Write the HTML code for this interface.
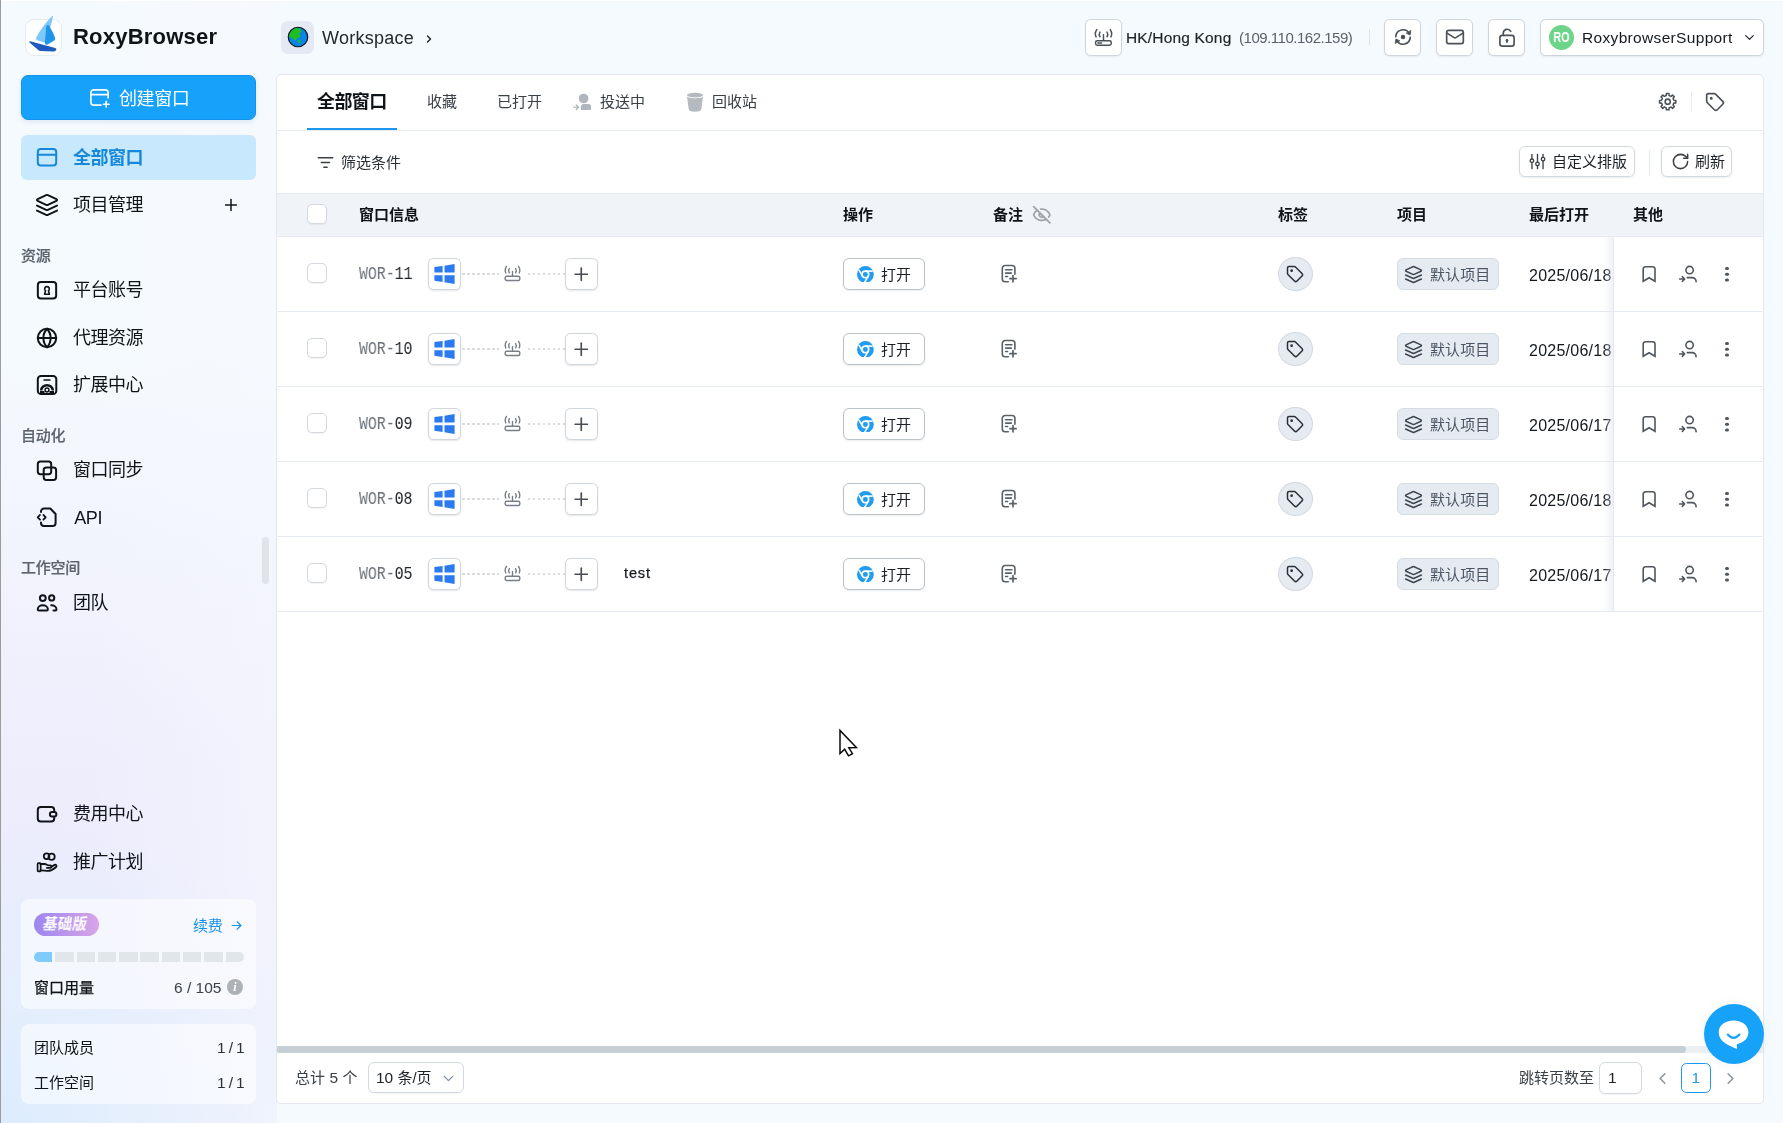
<!DOCTYPE html>
<html lang="zh-CN"><head><meta charset="utf-8"><title>RoxyBrowser</title>
<style>
*{box-sizing:border-box;margin:0;padding:0}
html,body{width:1783px;height:1123px;overflow:hidden}
body{font-family:"Liberation Sans","Noto Sans CJK SC",sans-serif;color:#0f1419;font-size:15px;
 background:#f5fafe;}
#app{position:relative;width:1783px;height:1123px;overflow:hidden;
 background:
  linear-gradient(180deg,#fff 0,#fff 1px,rgba(255,255,255,0) 1px) 1px 0/100% 2px no-repeat,
  linear-gradient(90deg,#9c9c9c 0,#9c9c9c 1px,rgba(0,0,0,0) 1px) 0 0/2px 100% no-repeat,
  radial-gradient(circle at 0 1123px,rgba(220,236,253,1) 0,rgba(224,238,253,.7) 120px,rgba(226,238,253,0) 330px) 0 0/277px 100% no-repeat,
  linear-gradient(90deg,rgba(246,248,254,0) 90px,rgba(246,248,254,.55) 277px) 0 0/277px 100% no-repeat,
  linear-gradient(180deg,rgba(238,237,252,0) 360px,rgba(238,237,252,.45) 540px,rgba(237,236,252,.9) 760px,rgba(237,236,252,.95) 900px,rgba(238,239,252,.85) 1123px) 0 0/277px 100% no-repeat,
  #f5fafe;}
.abs{position:absolute}
svg{display:block}
.t{position:absolute;white-space:nowrap;line-height:1}
.t,.nav,.sec,.th,.gs{will-change:transform}
/* sidebar */
.create{position:absolute;left:21px;top:75px;width:235px;height:45px;border-radius:7px;background:#16a1fb;border:1px solid #1394ec;box-shadow:0 2px 5px rgba(20,60,140,.10);color:#fff}
.nav-active{position:absolute;left:21px;top:135px;width:235px;height:45px;border-radius:6px;background:#c7e8fd}
.nav{position:absolute;left:35.300px;height:24px;display:flex;align-items:center;color:#0f1419;font-size:18px}
.nav svg{margin-right:14px}
.nav span{display:block;line-height:24px;letter-spacing:-.5px}
.sec{position:absolute;left:21px;font-size:15px;color:#5c636c;line-height:16px;font-weight:500;letter-spacing:-.25px;-webkit-text-stroke:.2px #5c636c}
.card{position:absolute;left:21px;width:235px;border-radius:8px;background:rgba(255,255,255,.55)}
/* header */
.hbtn{position:absolute;top:19px;width:37px;height:37px;border:1px solid #d0d5dc;border-radius:5.500px;background:#fff;box-shadow:0 1px 2px rgba(16,24,40,.07);display:flex;align-items:center;justify-content:center;color:#4b5158;padding-bottom:1px}
/* main */
.main{position:absolute;left:276px;top:74px;width:1488px;height:1030px;background:#fff;border:1px solid #e4e8ee;border-radius:5px;overflow:hidden}
.hl{position:absolute;left:0;height:1px;background:#e5e9f0}
.btn{position:absolute;height:33px;border:1px solid #d3d9e0;border-radius:6px;background:#fff;box-shadow:0 1px 2px rgba(16,24,40,.08);display:flex;align-items:center;color:#1b2127;font-size:15px}
.cb{position:absolute;left:30.300px;width:19.700px;height:19.700px;border:1px solid #d3d8df;border-radius:5px;background:#fff;box-shadow:0 1px 1px rgba(16,24,40,.05)}
.th{position:absolute;top:132.300px;font-weight:700;font-size:15px;line-height:16px;color:#0f1419;white-space:nowrap}
.row{position:absolute;left:0;width:1486px;height:75px;border-bottom:1px solid #e5e9f0}
.mono{font-family:"Liberation Mono","DejaVu Sans Mono",monospace}
.ibox{position:absolute;width:32.400px;height:31.800px;border:1px solid #d0d6dd;border-radius:5.500px;background:#fff;box-shadow:0 1px 2px rgba(16,24,40,.10);display:flex;align-items:center;justify-content:center}
.dot{position:absolute;height:2px;background:repeating-linear-gradient(90deg,#d9dce0 0,#d9dce0 2.500px,rgba(0,0,0,0) 2.500px,rgba(0,0,0,0) 5px)}
.chip{position:absolute;height:33px;border:1px solid #d6dce4;border-radius:6px;background:#e6ebf1;display:flex;align-items:center;color:#4b5563;font-size:15px}
.tagc{position:absolute;width:34.800px;height:34.500px;border-radius:50%;background:#e6ebf1;border:1px solid #d3d9e0;display:flex;align-items:center;justify-content:center;color:#2a3038}
</style></head>
<body>
<div id="app">

<div class="abs" style="left:25px;top:19px;width:37px;height:37px;border-radius:9px;background:#fff;border:1px solid #e6eaf3"></div>
<svg class="abs" style="left:20px;top:10px" width="50" height="50" viewBox="20 10 50 50">
<path d="M52.100 15.900 Q52.900 15.200 52.900 16.300 Q52.300 21 50.700 26 L46 43 L37.200 40.200 Q35.400 39.600 36.200 37.800 Q41 27.500 52.100 15.900 Z" fill="#7cc8fb"/>
<path d="M46.300 26.200 Q47.700 23.800 49.300 26 Q53.500 33 55.100 38 Q55.500 39.600 54.200 40.500 L47.600 44.600 Q46.200 45.300 45.300 44 Q44.800 43 44.900 42 Z" fill="#1e94ea"/>
<path d="M30.100 41.300 L55.300 48 Q57 48.800 56.200 50 Q55.200 51.500 53.300 51.600 L40.300 51.100 Q39.300 51 38.500 50.300 L29.500 42.500 Q28.800 41.200 30.100 41.300 Z" fill="#1f5bbd"/>
</svg>
<div class="t" style="left:73px;top:26px;font-size:22px;font-weight:700;letter-spacing:.22px;color:#0f1419" id="brand">RoxyBrowser</div>
<div class="create"><div class="abs" style="left:66px;top:10px"><svg width="23" height="23" viewBox="0 0 24 24" fill="none" stroke="currentColor" stroke-width="1.7" stroke-linecap="round" stroke-linejoin="round" class="" style=""><path d="M21 12.500V7a3 3 0 0 0-3-3H6a3 3 0 0 0-3 3v10a3 3 0 0 0 3 3h7.500"/><path d="M3 9h18"/><path d="M16 19h6"/><path d="M19 16v6"/></svg></div><div class="t" style="left:96.500px;top:13.500px;font-size:18px;letter-spacing:-.4px" id="createtxt">创建窗口</div></div>
<div class="nav-active"></div>
<div class="nav" style="top:145.5px;color:#1588db;font-weight:700"><svg width="24" height="24" viewBox="0 0 24 24" fill="none" stroke="currentColor" stroke-width="2" stroke-linecap="round" stroke-linejoin="round" class="" style=""><rect width="18.400" height="16.500" x="2.800" y="2.900" rx="3"/><path d="M2.800 8.800h18.400"/></svg><span style="">全部窗口</span></div>
<div class="nav" style="top:192.5px;color:#0f1419;font-weight:400"><svg width="24" height="24" viewBox="0 0 24 24" fill="none" stroke="currentColor" stroke-width="2" stroke-linecap="round" stroke-linejoin="round" class="" style=""><path d="m12.83 2.18a2 2 0 0 0-1.66 0L2.6 6.08a1 1 0 0 0 0 1.83l8.58 3.91a2 2 0 0 0 1.66 0l8.58-3.9a1 1 0 0 0 0-1.83Z"/><path d="m22 17.65-9.17 4.16a2 2 0 0 1-1.66 0L2 17.65"/><path d="m22 12.65-9.17 4.16a2 2 0 0 1-1.66 0L2 12.65"/></svg><span style="">项目管理</span></div>
<div class="abs" style="left:221px;top:195px;color:#0f1419"><svg width="20" height="20" viewBox="0 0 24 24" fill="none" stroke="currentColor" stroke-width="1.8" stroke-linecap="round" stroke-linejoin="round" class="" style=""><path d="M5.500 12h13"/><path d="M12 5.500v13"/></svg></div>
<div class="sec" style="top:248px">资源</div>
<div class="nav" style="top:278px;color:#0f1419;font-weight:400"><svg width="24" height="24" viewBox="0 0 24 24" fill="none" stroke="currentColor" stroke-width="2" stroke-linecap="round" stroke-linejoin="round" class="" style=""><rect width="18.300" height="16.500" x="2.850" y="4" rx="3"/><path d="M12 8.600a2.300 2.300 0 0 1 1.500 4.100l.9 3.500h-4.800l.9-3.500a2.300 2.300 0 0 1 1.500-4.100z" stroke-width="1.600"/></svg><span style="">平台账号</span></div>
<div class="nav" style="top:325.5px;color:#0f1419;font-weight:400"><svg width="24" height="24" viewBox="0 0 24 24" fill="none" stroke="currentColor" stroke-width="2" stroke-linecap="round" stroke-linejoin="round" class="" style=""><circle cx="12" cy="12" r="9.200"/><path d="M12 2.800a13.500 13.500 0 0 0 0 18.400 13.500 13.500 0 0 0 0-18.400"/><path d="M2.800 12h18.400"/></svg><span style="">代理资源</span></div>
<div class="nav" style="top:373px;color:#0f1419;font-weight:400"><svg width="24" height="24" viewBox="0 0 24 24" fill="none" stroke="currentColor" stroke-width="2" stroke-linecap="round" stroke-linejoin="round" class="" style=""><rect width="18.500" height="18" x="2.800" y="3.100" rx="3.200"/><path d="M9 7h6" stroke-width="1.500"/><path d="M6.200 17.500a5.800 5.300 0 0 1 11.600 0" stroke-width="2.600" stroke-linecap="butt"/><circle cx="12" cy="17" r="1.900" stroke-width="1.500"/><path d="M5 19.300h4.500M14.500 19.300h4.500" stroke-width="2.400" stroke-linecap="butt"/></svg><span style="">扩展中心</span></div>
<div class="sec" style="top:428px">自动化</div>
<div class="nav" style="top:457.5px;color:#0f1419;font-weight:400"><svg width="24" height="24" viewBox="0 0 24 24" fill="none" stroke="currentColor" stroke-width="2" stroke-linecap="round" stroke-linejoin="round" class="" style=""><rect width="13.400" height="12.600" x="2.800" y="3.600" rx="2.600"/><rect width="12.400" height="12.500" x="8.700" y="9.400" rx="2.600"/></svg><span style="">窗口同步</span></div>
<div class="nav" style="top:505px;color:#0f1419;font-weight:400"><svg width="24" height="24" viewBox="0 0 24 24" fill="none" stroke="currentColor" stroke-width="2" stroke-linecap="round" stroke-linejoin="round" class="" style=""><path d="M6 7.100V6.500a3 3 0 0 1 3-3h6.300L20.600 9v9a3 3 0 0 1-3 3H9a3 3 0 0 1-3-3v-.600"/><path d="M5 9.900 2.700 12.300 5 14.700" stroke-width="1.800"/><path d="M8.400 9.900l2.300 2.400-2.300 2.400" stroke-width="1.800"/></svg><span style="position:relative;left:1.300px;top:.800px;letter-spacing:-.45px">API</span></div>
<div class="sec" style="top:560px">工作空间</div>
<div class="nav" style="top:590.5px;color:#0f1419;font-weight:400"><svg width="24" height="24" viewBox="0 0 24 24" fill="none" stroke="currentColor" stroke-width="2" stroke-linecap="round" stroke-linejoin="round" class="" style=""><circle cx="7.800" cy="7.100" r="2.900"/><circle cx="16.700" cy="6.900" r="2.600"/><path d="M2.700 18.300a5.100 4 0 0 1 10.200 0q0 1.200-1.200 1.200H3.900q-1.200 0-1.200-1.200z"/><path d="M16.200 14.300c3.200 0 5.300 1.900 5.300 4.100q0 1.100-1.100 1.100h-1.900"/></svg><span style="">团队</span></div>
<div class="abs" style="left:262px;top:537px;width:7px;height:47px;border-radius:4px;background:#dfe4ea"></div>
<div class="nav" style="top:802px;color:#0f1419;font-weight:400"><svg width="24" height="24" viewBox="0 0 24 24" fill="none" stroke="currentColor" stroke-width="2" stroke-linecap="round" stroke-linejoin="round" class="" style=""><path d="M19.200 9.600V8a3 3 0 0 0-3-3H5.800a3 3 0 0 0-3 3v8.500a3 3 0 0 0 3 3h10.400a3 3 0 0 0 3-3v-1.600"/><rect x="14.900" y="10.100" width="6.500" height="4.400" rx="2.200"/></svg><span style="">费用中心</span></div>
<div class="nav" style="top:849.5px;color:#0f1419;font-weight:400"><svg width="24" height="24" viewBox="0 0 24 24" fill="none" stroke="currentColor" stroke-width="2" stroke-linecap="round" stroke-linejoin="round" class="" style=""><circle cx="11.600" cy="6.200" r="2.800" stroke-width="1.800"/><circle cx="16.600" cy="6.700" r="3.100" stroke-width="1.800"/><rect x="2.600" y="13.200" width="3.100" height="8.100" rx=".7" stroke-width="1.700"/><path d="M5.400 14h4.400c1.700 0 2.300 1.400 4 1.400h1.500a1.250 1.250 0 0 1 0 2.500h-3.400" stroke-width="1.800"/><path d="M16.400 16.700l3.200-1.800a1.300 1.300 0 0 1 1.500 2.100c-2.500 2.400-5.600 3.900-8.300 3.900-2.300 0-4.200-.5-7.400-.5" stroke-width="1.800"/></svg><span style="">推广计划</span></div>
<div class="card" style="top:899px;height:110px">
 <div class="abs" style="left:13px;top:14px;width:65px;height:23px;border-radius:12px;background:linear-gradient(90deg,#9b86ef,#d9a5e8)"></div>
 <div class="t" style="left:22px;top:18px;font-size:14.500px;font-weight:700;color:#fff;transform:skewX(-9deg);letter-spacing:.3px">基础版</div>
 <div class="t" style="left:172px;top:18.500px;font-size:15px;color:#1a90e8;letter-spacing:-.3px">续费</div>
 <div class="abs" style="left:208px;top:18.500px;color:#1a90e8"><svg width="15" height="15" viewBox="0 0 24 24" fill="none" stroke="currentColor" stroke-width="1.8" stroke-linecap="round" stroke-linejoin="round" class="" style=""><path d="M5 12h14"/><path d="m13 6 6 6-6 6"/></svg></div>
 <div class="abs" style="left:13px;top:53px;width:210px;height:10px;border-radius:5px;overflow:hidden;display:flex;gap:2.800px">
  <i style="flex:1;background:#7fcbfb"></i><i style="flex:1;background:#e1e6eb"></i><i style="flex:1;background:#e1e6eb"></i><i style="flex:1;background:#e1e6eb"></i><i style="flex:1;background:#e1e6eb"></i><i style="flex:1;background:#e1e6eb"></i><i style="flex:1;background:#e1e6eb"></i><i style="flex:1;background:#e1e6eb"></i><i style="flex:1;background:#e1e6eb"></i><i style="flex:1;background:#e1e6eb"></i>
 </div>
 <div class="t" style="left:13px;top:81px;font-size:15px;color:#0f1419;font-weight:400;-webkit-text-stroke:.25px #0f1419">窗口用量</div>
 <div class="t" style="right:35px;top:80.500px;font-size:15.500px;color:#3c424a">6 / 105</div>
 <div class="abs gs" style="left:206px;top:80px;width:16px;height:16px;border-radius:50%;background:#acb2b8;color:#fff;font:italic 700 12px/16px 'Liberation Serif',serif;text-align:center">i</div>
</div>
<div class="card" style="top:1024px;height:80px">
 <div class="t" style="left:13px;top:16px;font-size:15px;color:#0f1419">团队成员</div>
 <div class="t" style="right:12px;top:16px;font-size:15.500px;color:#2c323a;word-spacing:-1px;letter-spacing:-.15px">1 / 1</div>
 <div class="t" style="left:13px;top:51px;font-size:15px;color:#0f1419">工作空间</div>
 <div class="t" style="right:12px;top:51px;font-size:15.500px;color:#2c323a;word-spacing:-1px;letter-spacing:-.15px">1 / 1</div>
</div>


<div class="abs" style="left:281px;top:21px;width:33px;height:33px;border-radius:7px;background:#e4e9f3"><div class="abs" style="left:5.600px;top:4.900px"><svg width="22" height="22" viewBox="0 0 23 23"><circle cx="11.500" cy="11.500" r="10.200" fill="#0b84e3" stroke="#0c1116" stroke-width="1.200"/>
<path d="M3.200 7.500C5 4 8.500 2 12 2.100c1 .8 2.500 1.200 3 2.500-.8 1.500-1 2.800-2.300 3.600.3 1.200 1.500 2 1.200 3.200-1 1-2.300.2-3.300 1.300-.8 1.100-1.400 2.400-2.800 2.200-1.200-.7-1.400-2-2.700-2.300C3.600 11.800 2.200 11.500 2 10.500c.3-1 .7-2 1.200-3z" fill="#1fbe1f"/>
<path d="M11.800 14.500c1-.2 2 .5 2.200 1.500.3 1-.3 2-1.200 2.200-.8-.5-1.200-1.300-1.400-2.200-.1-.6 0-1.200.4-1.500z" fill="#1fbe1f"/></svg></div></div>
<div class="t" style="left:321.500px;top:29px;font-size:18px;color:#24292f;letter-spacing:.25px" id="ws">Workspace</div>
<div class="abs" style="left:423px;top:32.900px;color:#24292f"><svg width="12" height="12" viewBox="0 0 24 24" fill="none" stroke="currentColor" stroke-width="2.9" stroke-linecap="round" stroke-linejoin="round" class="" style=""><path d="m9 18 6-6-6-6"/></svg></div>
<div class="hbtn" style="left:1085px"><svg width="19" height="19" viewBox="0 0 20 20" fill="none" stroke="currentColor" stroke-width="1.550" stroke-linecap="round" stroke-linejoin="round"><rect x="1.650" y="13.400" width="16.500" height="4.800" rx="1.800"/><path d="M4 15.800h4"/><path d="M10 7v6"/><path d="M6.300 4.300Q4.700 6.800 6.300 9.200"/><path d="M13.700 4.300Q15.300 6.800 13.700 9.200"/><path d="M2.900 1.700Q.3 5.500 2.200 9.400"/><path d="M17.100 1.700Q19.700 5.500 17.800 9.400"/></svg></div>
<div class="t" style="left:1126px;top:29.500px;font-size:15.500px;color:#1f2328;letter-spacing:.17px;-webkit-text-stroke:.18px #1f2328" id="hk">HK/Hong Kong</div>
<div class="t" style="left:1238.500px;top:29.700px;font-size:15px;color:#5a616b;letter-spacing:-.48px" id="ip">(109.110.162.159)</div>
<div class="abs" style="left:1369px;top:29px;width:1px;height:16px;background:#e0e4ea"></div>
<div class="hbtn" style="left:1384px"><svg width="20" height="20" viewBox="0 0 24 24" fill="none" stroke="currentColor" stroke-width="2" stroke-linecap="round" stroke-linejoin="round" class="" style=""><path d="M3.300 11.600a8.700 8.700 0 0 1 16.300-3.700"/><path d="M21.300 4.600 20.500 9.600 16.200 7.600z" fill="currentColor" stroke-width="1"/><path d="M20.700 12.400a8.700 8.700 0 0 1-16.300 3.700"/><path d="M2.700 19.400 3.500 14.400 7.800 16.400z" fill="currentColor" stroke-width="1"/><circle cx="12" cy="12" r="1.700" fill="currentColor"/></svg></div>
<div class="hbtn" style="left:1436px"><svg width="20" height="20" viewBox="0 0 24 24" fill="none" stroke="currentColor" stroke-width="2" stroke-linecap="round" stroke-linejoin="round" class="" style=""><rect width="20" height="16" x="2" y="4" rx="2.500"/><path d="m22 7-8.970 5.700a1.940 1.940 0 0 1-2.060 0L2 7"/></svg></div>
<div class="hbtn" style="left:1488px"><svg width="20" height="20" viewBox="0 0 24 24" fill="none" stroke="currentColor" stroke-width="2" stroke-linecap="round" stroke-linejoin="round" class="" style=""><rect width="17" height="13" x="3.500" y="10" rx="2.800"/><path d="M7.500 10V7.500a4.800 4.800 0 0 1 9-2.300"/><path d="M12 15.500v2.500" stroke-width="2.200"/><path d="M10.900 15.800l1.100-1.300 1.100 1.300z" stroke-width="1.200" fill="currentColor"/></svg></div>
<div class="hbtn" style="left:1540px;width:224px;justify-content:flex-start;border-color:#cdd3da">
 <div class="abs" style="left:8px;top:5px;width:25px;height:25px;border-radius:50%;background:#6dd58a"></div>
 <div class="t" style="left:8px;top:9.500px;width:25px;text-align:center;color:#fff;font-size:14.500px;font-weight:700;transform:scaleX(.74);letter-spacing:.2px" id="ro">RO</div>
 <div class="t" style="left:40.500px;top:9.500px;font-size:15.500px;color:#14191f;letter-spacing:.33px" id="user">RoxybrowserSupport</div>
 <div class="abs" style="left:200.500px;top:10px;color:#24292f"><svg width="15" height="15" viewBox="0 0 24 24" fill="none" stroke="currentColor" stroke-width="2" stroke-linecap="round" stroke-linejoin="round" class="" style=""><path d="m6 9 6 6 6-6"/></svg></div>
</div>


<div class="main">
 <!-- tabs -->
 <div class="t" style="left:40px;top:18.2px;font-size:18px;font-weight:700;color:#0f1419;letter-spacing:-.6px" id="tab1">全部窗口</div>
 <div class="abs" style="left:30px;top:53px;width:90px;height:2px;background:#1d97ee"></div>
 <div class="t" style="left:150px;top:19px;font-size:15px;color:#3a4048">收藏</div>
 <div class="t" style="left:220px;top:19px;font-size:15px;color:#3a4048">已打开</div>
 <div class="abs" style="left:296px;top:18px"><svg width="19" height="18" viewBox="0 0 19 18"><circle cx="10.600" cy="5.500" r="4.800" fill="#b0b6bd"/><path d="M8 17v-3.200a2.700 2.700 0 0 1 2.700-2.700h4.600a2.700 2.700 0 0 1 2.700 2.700V17z" fill="#b0b6bd"/><path d="M.8 14.200h4.500M3.300 11.900l2.300 2.300-2.300 2.300" stroke="#b0b6bd" stroke-width="1.300" fill="none" stroke-linecap="round" stroke-linejoin="round"/></svg></div>
 <div class="t" style="left:323px;top:19px;font-size:15px;color:#3a4048">投送中</div>
 <div class="abs" style="left:409px;top:17.3px"><svg width="18" height="20" viewBox="0 0 18 20"><ellipse cx="9" cy="3.200" rx="8" ry="2.500" fill="#b4bac0"/><path d="M1 4.800c2.500 1.900 13.500 1.900 16 0L15.300 17.300c-.3 1.800-3 2.500-6.300 2.500s-6-.7-6.300-2.500z" fill="#b4bac0"/><path d="M1.300 4.300c2.500 1.900 12.900 1.900 15.400 0" stroke="#fff" stroke-width=".8" fill="none" opacity=".75"/></svg></div>
 <div class="t" style="left:435px;top:19px;font-size:15px;color:#3a4048">回收站</div>
 <div class="abs" style="left:1381.2px;top:17.2px;color:#4b5158"><svg width="19.4" height="19.4" viewBox="0 0 24 24" fill="none" stroke="currentColor" stroke-width="1.9" stroke-linecap="round" stroke-linejoin="round" class="" style=""><path d="M10.24 4.40L10.40 1.93L13.60 1.93L13.76 4.40L16.13 5.38L18.00 3.75L20.25 6.00L18.62 7.87L19.60 10.24L22.07 10.40L22.07 13.60L19.60 13.76L18.62 16.13L20.25 18.00L18.00 20.25L16.13 18.62L13.76 19.60L13.60 22.07L10.40 22.07L10.24 19.60L7.87 18.62L6.00 20.25L3.75 18.00L5.38 16.13L4.40 13.76L1.93 13.60L1.93 10.40L4.40 10.24L5.38 7.87L3.75 6.00L6.00 3.75L7.87 5.38Z"/><circle cx="12" cy="12" r="3.200"/></svg></div>
 <div class="abs" style="left:1414px;top:17px;width:1px;height:20px;background:#e6e9ef"></div>
 <div class="abs" style="left:1427.8px;top:16.7px;color:#4b5158"><svg width="20" height="20" viewBox="0 0 24 24" fill="none" stroke="currentColor" stroke-width="2" stroke-linecap="round" stroke-linejoin="round" class="" style=""><path d="M12.586 2.586A2 2 0 0 0 11.172 2H4a2 2 0 0 0-2 2v7.172a2 2 0 0 0 .586 1.414l8.704 8.704a2.426 2.426 0 0 0 3.420 0l6.580-6.580a2.426 2.426 0 0 0 0-3.420z"/><circle cx="7.500" cy="7.500" r=".8" fill="currentColor"/></svg></div>
 <div class="hl" style="top:55px;width:1486px"></div>
 <!-- filter -->
 <div class="abs" style="left:39.4px;top:77.5px;color:#3a3f46"><svg width="19" height="19" viewBox="0 0 24 24" fill="none" stroke="currentColor" stroke-width="2.1" stroke-linecap="round" stroke-linejoin="round" class="" style=""><path d="M3 6h18"/><path d="M7 12h10"/><path d="M10 18h4"/></svg></div>
 <div class="t" style="left:64px;top:79.8px;font-size:15px;color:#2a3038">筛选条件</div>
 <div class="btn" style="left:1242.4px;top:71.4px;width:116.100px;height:31px"><div class="abs" style="left:8px;top:5px;color:#3a3f46"><svg width="19" height="19" viewBox="0 0 24 24" fill="none" stroke="currentColor" stroke-width="1.7" stroke-linecap="round" stroke-linejoin="round" class="" style=""><path d="M5 3v5"/><path d="M5 14v7"/><circle cx="5" cy="11" r="2.200"/><path d="M12 3v9"/><path d="M12 18v3"/><circle cx="12" cy="15" r="2.200"/><path d="M19 3v3"/><path d="M19 12v9"/><circle cx="19" cy="9" r="2.200"/></svg></div><div class="t" style="left:32px;top:6.800px;font-size:15px">自定义排版</div></div>
 <div class="abs" style="left:1372px;top:75px;width:1px;height:25px;background:#e3e6ea"></div>
 <div class="btn" style="left:1384.3px;top:71.4px;width:71.100px;height:31px"><div class="abs" style="left:8.500px;top:5px;color:#3a3f46"><svg width="19" height="19" viewBox="0 0 24 24" fill="none" stroke="currentColor" stroke-width="1.9" stroke-linecap="round" stroke-linejoin="round" class="" style=""><path d="M21 12a9 9 0 1 1-9-9c2.520 0 4.930 1 6.740 2.740L21 8"/><path d="M21 3v5h-5"/></svg></div><div class="t" style="left:32.500px;top:6.800px;font-size:15px">刷新</div></div>
 <!-- thead -->
 <div class="abs" style="left:0;top:118px;width:1486px;height:44px;background:#f0f4f9;border-top:1px solid #e5e9f0;border-bottom:1px solid #e5e9f0"></div>
 <div class="cb" style="top:129.2px"></div>
 <div class="th" style="left:82px">窗口信息</div>
 <div class="th" style="left:566px">操作</div>
 <div class="th" style="left:716px">备注</div>
 <div class="abs" style="left:755.3px;top:130.3px;color:#9ea4aa"><svg width="19.5" height="19.5" viewBox="0 0 24 24" fill="none" stroke="currentColor" stroke-width="2.2" stroke-linecap="round" stroke-linejoin="round" class="" style=""><path d="M10.733 5.076a10.744 10.744 0 0 1 11.205 6.575 1 1 0 0 1 0 .696 10.747 10.747 0 0 1-1.444 2.490"/><path d="M14.084 14.158a3 3 0 0 1-4.242-4.242"/><path d="M17.479 17.499a10.750 10.750 0 0 1-15.417-5.151 1 1 0 0 1 0-.696 10.750 10.750 0 0 1 4.446-5.143"/><path d="m2 2 20 20"/></svg></div>
 <div class="th" style="left:1001px">标签</div>
 <div class="th" style="left:1120px">项目</div>
 <div class="th" style="left:1252px">最后打开</div>
 <div class="th" style="left:1356px">其他</div>
 <div class="row" style="top:162px">
 <div class="cb" style="top:26px"></div>
 <div class="t mono" style="left:82px;top:27.500px;font-size:18px;color:#6a7079;transform:scaleX(.825);transform-origin:0 50%">WOR-<span style="color:#1f2328">11</span></div>
 <div class="ibox" style="left:151.3px;top:21.300px"><svg width="21" height="20" viewBox="0 0 20.200 20"><path d="M0 3.100 8.200 2v6.600H0zM10.100 1.700 20.200 0v8.600H10.100zM0 11.200h8.200v6.700L0 16.800zM10.100 11.200h10.100V20l-10.100-1.800z" fill="#2b7af0"/></svg></div>
 <div class="dot" style="left:184.5px;top:36px;width:37px"></div>
 <div class="abs" style="left:227.4px;top:27.600px;color:#787e86"><svg width="17" height="17" viewBox="0 0 20 20" fill="none" stroke="currentColor" stroke-width="1.650" stroke-linecap="round" stroke-linejoin="round"><rect x="1.400" y="13.200" width="17.200" height="5" rx="1.800"/><path d="M10 7.500v5.500"/><path d="M6.300 4.300Q4.700 6.800 6.300 9.200"/><path d="M13.700 4.300Q15.300 6.800 13.700 9.200"/><path d="M2.900 1.700Q.3 5.500 2.200 9.400"/><path d="M17.100 1.700Q19.700 5.500 17.800 9.400"/></svg></div>
 <div class="dot" style="left:250.5px;top:36px;width:38px"></div>
 <div class="ibox" style="left:288.4px;top:21.300px;color:#4a4f57"><svg width="22.5" height="22.5" viewBox="0 0 24 24" fill="none" stroke="currentColor" stroke-width="1.8" stroke-linecap="round" stroke-linejoin="round" class="" style=""><path d="M5.500 12h13"/><path d="M12 5.500v13"/></svg></div>
 
 <div class="btn" style="left:566.2px;top:21px;width:81.600px;height:31.700px;border-color:#bcc2ca">
   <div class="abs" style="left:13.200px;top:6.700px"><svg width="16.800" height="16.800" viewBox="0 0 24 24"><circle cx="12" cy="12" r="12" fill="#209cf1"/>
<circle cx="12" cy="12" r="4.700" fill="none" stroke="#fff" stroke-width="2.300"/>
<path d="M12 7.300H22.500" stroke="#fff" stroke-width="2.300" fill="none"/>
<path d="M7.900 14.400L2.700 5.400" stroke="#fff" stroke-width="2.300" fill="none"/>
<path d="M16.100 14.400L10.900 23.400" stroke="#fff" stroke-width="2.300" fill="none"/></svg></div><div class="t" style="left:37px;top:7.500px;font-size:15px">打开</div></div>
 <div class="abs" style="left:723px;top:27px;color:#5a6068"><svg width="20" height="20" viewBox="0 0 20 20" fill="none" stroke="currentColor" stroke-width="1.600" stroke-linecap="round" stroke-linejoin="round"><path d="M14.900 10.300V4.300a2.800 2.800 0 0 0-2.800-2.800H5.100a2.800 2.800 0 0 0-2.800 2.800v10.700a2.800 2.800 0 0 0 2.800 2.800h3.200"/><path d="M5.600 5.700h6.300M5.600 9.100h5.800M5.600 12.500h2"/><path d="M9.900 14.700h6.200M13 11.600v6.200" stroke-width="1.700"/></svg></div>
 <div class="tagc" style="left:1001px;top:19.600px"><svg width="18" height="18" viewBox="0 0 24 24" fill="none" stroke="currentColor" stroke-width="2" stroke-linecap="round" stroke-linejoin="round" class="" style=""><path d="M12.586 2.586A2 2 0 0 0 11.172 2H4a2 2 0 0 0-2 2v7.172a2 2 0 0 0 .586 1.414l8.704 8.704a2.426 2.426 0 0 0 3.420 0l6.580-6.580a2.426 2.426 0 0 0 0-3.420z"/><circle cx="7.500" cy="7.500" r=".8" fill="currentColor"/></svg></div>
 <div class="chip" style="left:1120.2px;top:21px;width:101.600px;height:31.500px"><div class="abs" style="left:6px;top:5.500px;color:#3f4650"><svg width="19" height="19" viewBox="0 0 24 24" fill="none" stroke="currentColor" stroke-width="1.9" stroke-linecap="round" stroke-linejoin="round" class="" style=""><path d="m12.83 2.18a2 2 0 0 0-1.66 0L2.6 6.08a1 1 0 0 0 0 1.83l8.58 3.91a2 2 0 0 0 1.66 0l8.58-3.9a1 1 0 0 0 0-1.83Z"/><path d="m22 17.65-9.17 4.16a2 2 0 0 1-1.66 0L2 17.65"/><path d="m22 12.65-9.17 4.16a2 2 0 0 1-1.66 0L2 12.65"/></svg></div><div class="t" style="left:32px;top:7.500px;font-size:15px;letter-spacing:.1px">默认项目</div></div>
 <div class="t" style="left:1252.3px;top:30.700px;font-size:16px;color:#14191f;letter-spacing:.25px">2025/06/18</div>
 <div class="abs" style="left:1326px;top:0;width:10px;height:74px;background:linear-gradient(90deg,rgba(225,230,240,0),rgba(225,230,240,.55))"></div>
 <div class="abs" style="left:1336px;top:0;width:151px;height:74px;background:#fff;border-left:1px solid #e4e8f0"></div>
 <div class="abs" style="left:1362px;top:27px;color:#50565e"><svg width="20" height="20" viewBox="0 0 20 20" fill="none" stroke="currentColor" stroke-width="1.600" stroke-linecap="butt" stroke-linejoin="miter"><path d="M4.200 17.300V5a2.300 2.300 0 0 1 2.300-2.300h7.200A2.300 2.300 0 0 1 16 5v12.300l-5.900-3.600z"/></svg></div>
 <div class="abs" style="left:1401px;top:27px;color:#50565e"><svg width="20" height="20" viewBox="0 0 20 20" fill="none" stroke="currentColor" stroke-width="1.600" stroke-linecap="round" stroke-linejoin="round"><circle cx="11.600" cy="6.100" r="3.700"/><path d="M9.300 13.600h5a3.800 3.800 0 0 1 3.800 3.800v.4"/><path d="M1.600 15h5M4.300 12.600l2.400 2.400-2.400 2.400" stroke-width="1.500"/></svg></div>
 <div class="abs" style="left:1448.2px;top:29.700px;width:3.500px;height:3.500px;border-radius:50%;background:#50565e;box-shadow:0 5.700px 0 #50565e,0 11.400px 0 #50565e"></div>
</div><div class="row" style="top:237px">
 <div class="cb" style="top:26px"></div>
 <div class="t mono" style="left:82px;top:27.500px;font-size:18px;color:#6a7079;transform:scaleX(.825);transform-origin:0 50%">WOR-<span style="color:#1f2328">10</span></div>
 <div class="ibox" style="left:151.3px;top:21.300px"><svg width="21" height="20" viewBox="0 0 20.200 20"><path d="M0 3.100 8.200 2v6.600H0zM10.100 1.700 20.200 0v8.600H10.100zM0 11.200h8.200v6.700L0 16.800zM10.100 11.200h10.100V20l-10.100-1.800z" fill="#2b7af0"/></svg></div>
 <div class="dot" style="left:184.5px;top:36px;width:37px"></div>
 <div class="abs" style="left:227.4px;top:27.600px;color:#787e86"><svg width="17" height="17" viewBox="0 0 20 20" fill="none" stroke="currentColor" stroke-width="1.650" stroke-linecap="round" stroke-linejoin="round"><rect x="1.400" y="13.200" width="17.200" height="5" rx="1.800"/><path d="M10 7.500v5.500"/><path d="M6.300 4.300Q4.700 6.800 6.300 9.200"/><path d="M13.700 4.300Q15.300 6.800 13.700 9.200"/><path d="M2.900 1.700Q.3 5.500 2.200 9.400"/><path d="M17.100 1.700Q19.700 5.500 17.800 9.400"/></svg></div>
 <div class="dot" style="left:250.5px;top:36px;width:38px"></div>
 <div class="ibox" style="left:288.4px;top:21.300px;color:#4a4f57"><svg width="22.5" height="22.5" viewBox="0 0 24 24" fill="none" stroke="currentColor" stroke-width="1.8" stroke-linecap="round" stroke-linejoin="round" class="" style=""><path d="M5.500 12h13"/><path d="M12 5.500v13"/></svg></div>
 
 <div class="btn" style="left:566.2px;top:21px;width:81.600px;height:31.700px;border-color:#bcc2ca">
   <div class="abs" style="left:13.200px;top:6.700px"><svg width="16.800" height="16.800" viewBox="0 0 24 24"><circle cx="12" cy="12" r="12" fill="#209cf1"/>
<circle cx="12" cy="12" r="4.700" fill="none" stroke="#fff" stroke-width="2.300"/>
<path d="M12 7.300H22.500" stroke="#fff" stroke-width="2.300" fill="none"/>
<path d="M7.900 14.400L2.700 5.400" stroke="#fff" stroke-width="2.300" fill="none"/>
<path d="M16.100 14.400L10.900 23.400" stroke="#fff" stroke-width="2.300" fill="none"/></svg></div><div class="t" style="left:37px;top:7.500px;font-size:15px">打开</div></div>
 <div class="abs" style="left:723px;top:27px;color:#5a6068"><svg width="20" height="20" viewBox="0 0 20 20" fill="none" stroke="currentColor" stroke-width="1.600" stroke-linecap="round" stroke-linejoin="round"><path d="M14.900 10.300V4.300a2.800 2.800 0 0 0-2.800-2.800H5.100a2.800 2.800 0 0 0-2.800 2.800v10.700a2.800 2.800 0 0 0 2.800 2.800h3.200"/><path d="M5.600 5.700h6.300M5.600 9.100h5.800M5.600 12.500h2"/><path d="M9.900 14.700h6.200M13 11.600v6.200" stroke-width="1.700"/></svg></div>
 <div class="tagc" style="left:1001px;top:19.600px"><svg width="18" height="18" viewBox="0 0 24 24" fill="none" stroke="currentColor" stroke-width="2" stroke-linecap="round" stroke-linejoin="round" class="" style=""><path d="M12.586 2.586A2 2 0 0 0 11.172 2H4a2 2 0 0 0-2 2v7.172a2 2 0 0 0 .586 1.414l8.704 8.704a2.426 2.426 0 0 0 3.420 0l6.580-6.580a2.426 2.426 0 0 0 0-3.420z"/><circle cx="7.500" cy="7.500" r=".8" fill="currentColor"/></svg></div>
 <div class="chip" style="left:1120.2px;top:21px;width:101.600px;height:31.500px"><div class="abs" style="left:6px;top:5.500px;color:#3f4650"><svg width="19" height="19" viewBox="0 0 24 24" fill="none" stroke="currentColor" stroke-width="1.9" stroke-linecap="round" stroke-linejoin="round" class="" style=""><path d="m12.83 2.18a2 2 0 0 0-1.66 0L2.6 6.08a1 1 0 0 0 0 1.83l8.58 3.91a2 2 0 0 0 1.66 0l8.58-3.9a1 1 0 0 0 0-1.83Z"/><path d="m22 17.65-9.17 4.16a2 2 0 0 1-1.66 0L2 17.65"/><path d="m22 12.65-9.17 4.16a2 2 0 0 1-1.66 0L2 12.65"/></svg></div><div class="t" style="left:32px;top:7.500px;font-size:15px;letter-spacing:.1px">默认项目</div></div>
 <div class="t" style="left:1252.3px;top:30.700px;font-size:16px;color:#14191f;letter-spacing:.25px">2025/06/18</div>
 <div class="abs" style="left:1326px;top:0;width:10px;height:74px;background:linear-gradient(90deg,rgba(225,230,240,0),rgba(225,230,240,.55))"></div>
 <div class="abs" style="left:1336px;top:0;width:151px;height:74px;background:#fff;border-left:1px solid #e4e8f0"></div>
 <div class="abs" style="left:1362px;top:27px;color:#50565e"><svg width="20" height="20" viewBox="0 0 20 20" fill="none" stroke="currentColor" stroke-width="1.600" stroke-linecap="butt" stroke-linejoin="miter"><path d="M4.200 17.300V5a2.300 2.300 0 0 1 2.300-2.300h7.200A2.300 2.300 0 0 1 16 5v12.300l-5.900-3.600z"/></svg></div>
 <div class="abs" style="left:1401px;top:27px;color:#50565e"><svg width="20" height="20" viewBox="0 0 20 20" fill="none" stroke="currentColor" stroke-width="1.600" stroke-linecap="round" stroke-linejoin="round"><circle cx="11.600" cy="6.100" r="3.700"/><path d="M9.300 13.600h5a3.800 3.800 0 0 1 3.800 3.800v.4"/><path d="M1.600 15h5M4.300 12.600l2.400 2.400-2.400 2.400" stroke-width="1.500"/></svg></div>
 <div class="abs" style="left:1448.2px;top:29.700px;width:3.500px;height:3.500px;border-radius:50%;background:#50565e;box-shadow:0 5.700px 0 #50565e,0 11.400px 0 #50565e"></div>
</div><div class="row" style="top:312px">
 <div class="cb" style="top:26px"></div>
 <div class="t mono" style="left:82px;top:27.500px;font-size:18px;color:#6a7079;transform:scaleX(.825);transform-origin:0 50%">WOR-<span style="color:#1f2328">09</span></div>
 <div class="ibox" style="left:151.3px;top:21.300px"><svg width="21" height="20" viewBox="0 0 20.200 20"><path d="M0 3.100 8.200 2v6.600H0zM10.100 1.700 20.200 0v8.600H10.100zM0 11.200h8.200v6.700L0 16.800zM10.100 11.200h10.100V20l-10.100-1.800z" fill="#2b7af0"/></svg></div>
 <div class="dot" style="left:184.5px;top:36px;width:37px"></div>
 <div class="abs" style="left:227.4px;top:27.600px;color:#787e86"><svg width="17" height="17" viewBox="0 0 20 20" fill="none" stroke="currentColor" stroke-width="1.650" stroke-linecap="round" stroke-linejoin="round"><rect x="1.400" y="13.200" width="17.200" height="5" rx="1.800"/><path d="M10 7.500v5.500"/><path d="M6.300 4.300Q4.700 6.800 6.300 9.200"/><path d="M13.700 4.300Q15.300 6.800 13.700 9.200"/><path d="M2.900 1.700Q.3 5.500 2.200 9.400"/><path d="M17.100 1.700Q19.700 5.500 17.800 9.400"/></svg></div>
 <div class="dot" style="left:250.5px;top:36px;width:38px"></div>
 <div class="ibox" style="left:288.4px;top:21.300px;color:#4a4f57"><svg width="22.5" height="22.5" viewBox="0 0 24 24" fill="none" stroke="currentColor" stroke-width="1.8" stroke-linecap="round" stroke-linejoin="round" class="" style=""><path d="M5.500 12h13"/><path d="M12 5.500v13"/></svg></div>
 
 <div class="btn" style="left:566.2px;top:21px;width:81.600px;height:31.700px;border-color:#bcc2ca">
   <div class="abs" style="left:13.200px;top:6.700px"><svg width="16.800" height="16.800" viewBox="0 0 24 24"><circle cx="12" cy="12" r="12" fill="#209cf1"/>
<circle cx="12" cy="12" r="4.700" fill="none" stroke="#fff" stroke-width="2.300"/>
<path d="M12 7.300H22.500" stroke="#fff" stroke-width="2.300" fill="none"/>
<path d="M7.900 14.400L2.700 5.400" stroke="#fff" stroke-width="2.300" fill="none"/>
<path d="M16.100 14.400L10.900 23.400" stroke="#fff" stroke-width="2.300" fill="none"/></svg></div><div class="t" style="left:37px;top:7.500px;font-size:15px">打开</div></div>
 <div class="abs" style="left:723px;top:27px;color:#5a6068"><svg width="20" height="20" viewBox="0 0 20 20" fill="none" stroke="currentColor" stroke-width="1.600" stroke-linecap="round" stroke-linejoin="round"><path d="M14.900 10.300V4.300a2.800 2.800 0 0 0-2.800-2.800H5.100a2.800 2.800 0 0 0-2.800 2.800v10.700a2.800 2.800 0 0 0 2.800 2.800h3.200"/><path d="M5.600 5.700h6.300M5.600 9.100h5.800M5.600 12.500h2"/><path d="M9.900 14.700h6.200M13 11.600v6.200" stroke-width="1.700"/></svg></div>
 <div class="tagc" style="left:1001px;top:19.600px"><svg width="18" height="18" viewBox="0 0 24 24" fill="none" stroke="currentColor" stroke-width="2" stroke-linecap="round" stroke-linejoin="round" class="" style=""><path d="M12.586 2.586A2 2 0 0 0 11.172 2H4a2 2 0 0 0-2 2v7.172a2 2 0 0 0 .586 1.414l8.704 8.704a2.426 2.426 0 0 0 3.420 0l6.580-6.580a2.426 2.426 0 0 0 0-3.420z"/><circle cx="7.500" cy="7.500" r=".8" fill="currentColor"/></svg></div>
 <div class="chip" style="left:1120.2px;top:21px;width:101.600px;height:31.500px"><div class="abs" style="left:6px;top:5.500px;color:#3f4650"><svg width="19" height="19" viewBox="0 0 24 24" fill="none" stroke="currentColor" stroke-width="1.9" stroke-linecap="round" stroke-linejoin="round" class="" style=""><path d="m12.83 2.18a2 2 0 0 0-1.66 0L2.6 6.08a1 1 0 0 0 0 1.83l8.58 3.91a2 2 0 0 0 1.66 0l8.58-3.9a1 1 0 0 0 0-1.83Z"/><path d="m22 17.65-9.17 4.16a2 2 0 0 1-1.66 0L2 17.65"/><path d="m22 12.65-9.17 4.16a2 2 0 0 1-1.66 0L2 12.65"/></svg></div><div class="t" style="left:32px;top:7.500px;font-size:15px;letter-spacing:.1px">默认项目</div></div>
 <div class="t" style="left:1252.3px;top:30.700px;font-size:16px;color:#14191f;letter-spacing:.25px">2025/06/17</div>
 <div class="abs" style="left:1326px;top:0;width:10px;height:74px;background:linear-gradient(90deg,rgba(225,230,240,0),rgba(225,230,240,.55))"></div>
 <div class="abs" style="left:1336px;top:0;width:151px;height:74px;background:#fff;border-left:1px solid #e4e8f0"></div>
 <div class="abs" style="left:1362px;top:27px;color:#50565e"><svg width="20" height="20" viewBox="0 0 20 20" fill="none" stroke="currentColor" stroke-width="1.600" stroke-linecap="butt" stroke-linejoin="miter"><path d="M4.200 17.300V5a2.300 2.300 0 0 1 2.300-2.300h7.200A2.300 2.300 0 0 1 16 5v12.300l-5.900-3.600z"/></svg></div>
 <div class="abs" style="left:1401px;top:27px;color:#50565e"><svg width="20" height="20" viewBox="0 0 20 20" fill="none" stroke="currentColor" stroke-width="1.600" stroke-linecap="round" stroke-linejoin="round"><circle cx="11.600" cy="6.100" r="3.700"/><path d="M9.300 13.600h5a3.800 3.800 0 0 1 3.800 3.800v.4"/><path d="M1.600 15h5M4.300 12.600l2.400 2.400-2.400 2.400" stroke-width="1.500"/></svg></div>
 <div class="abs" style="left:1448.2px;top:29.700px;width:3.500px;height:3.500px;border-radius:50%;background:#50565e;box-shadow:0 5.700px 0 #50565e,0 11.400px 0 #50565e"></div>
</div><div class="row" style="top:387px">
 <div class="cb" style="top:26px"></div>
 <div class="t mono" style="left:82px;top:27.500px;font-size:18px;color:#6a7079;transform:scaleX(.825);transform-origin:0 50%">WOR-<span style="color:#1f2328">08</span></div>
 <div class="ibox" style="left:151.3px;top:21.300px"><svg width="21" height="20" viewBox="0 0 20.200 20"><path d="M0 3.100 8.200 2v6.600H0zM10.100 1.700 20.200 0v8.600H10.100zM0 11.200h8.200v6.700L0 16.800zM10.100 11.200h10.100V20l-10.100-1.800z" fill="#2b7af0"/></svg></div>
 <div class="dot" style="left:184.5px;top:36px;width:37px"></div>
 <div class="abs" style="left:227.4px;top:27.600px;color:#787e86"><svg width="17" height="17" viewBox="0 0 20 20" fill="none" stroke="currentColor" stroke-width="1.650" stroke-linecap="round" stroke-linejoin="round"><rect x="1.400" y="13.200" width="17.200" height="5" rx="1.800"/><path d="M10 7.500v5.500"/><path d="M6.300 4.300Q4.700 6.800 6.300 9.200"/><path d="M13.700 4.300Q15.300 6.800 13.700 9.200"/><path d="M2.900 1.700Q.3 5.500 2.200 9.400"/><path d="M17.100 1.700Q19.700 5.500 17.800 9.400"/></svg></div>
 <div class="dot" style="left:250.5px;top:36px;width:38px"></div>
 <div class="ibox" style="left:288.4px;top:21.300px;color:#4a4f57"><svg width="22.5" height="22.5" viewBox="0 0 24 24" fill="none" stroke="currentColor" stroke-width="1.8" stroke-linecap="round" stroke-linejoin="round" class="" style=""><path d="M5.500 12h13"/><path d="M12 5.500v13"/></svg></div>
 
 <div class="btn" style="left:566.2px;top:21px;width:81.600px;height:31.700px;border-color:#bcc2ca">
   <div class="abs" style="left:13.200px;top:6.700px"><svg width="16.800" height="16.800" viewBox="0 0 24 24"><circle cx="12" cy="12" r="12" fill="#209cf1"/>
<circle cx="12" cy="12" r="4.700" fill="none" stroke="#fff" stroke-width="2.300"/>
<path d="M12 7.300H22.500" stroke="#fff" stroke-width="2.300" fill="none"/>
<path d="M7.900 14.400L2.700 5.400" stroke="#fff" stroke-width="2.300" fill="none"/>
<path d="M16.100 14.400L10.900 23.400" stroke="#fff" stroke-width="2.300" fill="none"/></svg></div><div class="t" style="left:37px;top:7.500px;font-size:15px">打开</div></div>
 <div class="abs" style="left:723px;top:27px;color:#5a6068"><svg width="20" height="20" viewBox="0 0 20 20" fill="none" stroke="currentColor" stroke-width="1.600" stroke-linecap="round" stroke-linejoin="round"><path d="M14.900 10.300V4.300a2.800 2.800 0 0 0-2.800-2.800H5.100a2.800 2.800 0 0 0-2.800 2.800v10.700a2.800 2.800 0 0 0 2.800 2.800h3.200"/><path d="M5.600 5.700h6.300M5.600 9.100h5.800M5.600 12.500h2"/><path d="M9.900 14.700h6.200M13 11.600v6.200" stroke-width="1.700"/></svg></div>
 <div class="tagc" style="left:1001px;top:19.600px"><svg width="18" height="18" viewBox="0 0 24 24" fill="none" stroke="currentColor" stroke-width="2" stroke-linecap="round" stroke-linejoin="round" class="" style=""><path d="M12.586 2.586A2 2 0 0 0 11.172 2H4a2 2 0 0 0-2 2v7.172a2 2 0 0 0 .586 1.414l8.704 8.704a2.426 2.426 0 0 0 3.420 0l6.580-6.580a2.426 2.426 0 0 0 0-3.420z"/><circle cx="7.500" cy="7.500" r=".8" fill="currentColor"/></svg></div>
 <div class="chip" style="left:1120.2px;top:21px;width:101.600px;height:31.500px"><div class="abs" style="left:6px;top:5.500px;color:#3f4650"><svg width="19" height="19" viewBox="0 0 24 24" fill="none" stroke="currentColor" stroke-width="1.9" stroke-linecap="round" stroke-linejoin="round" class="" style=""><path d="m12.83 2.18a2 2 0 0 0-1.66 0L2.6 6.08a1 1 0 0 0 0 1.83l8.58 3.91a2 2 0 0 0 1.66 0l8.58-3.9a1 1 0 0 0 0-1.83Z"/><path d="m22 17.65-9.17 4.16a2 2 0 0 1-1.66 0L2 17.65"/><path d="m22 12.65-9.17 4.16a2 2 0 0 1-1.66 0L2 12.65"/></svg></div><div class="t" style="left:32px;top:7.500px;font-size:15px;letter-spacing:.1px">默认项目</div></div>
 <div class="t" style="left:1252.3px;top:30.700px;font-size:16px;color:#14191f;letter-spacing:.25px">2025/06/18</div>
 <div class="abs" style="left:1326px;top:0;width:10px;height:74px;background:linear-gradient(90deg,rgba(225,230,240,0),rgba(225,230,240,.55))"></div>
 <div class="abs" style="left:1336px;top:0;width:151px;height:74px;background:#fff;border-left:1px solid #e4e8f0"></div>
 <div class="abs" style="left:1362px;top:27px;color:#50565e"><svg width="20" height="20" viewBox="0 0 20 20" fill="none" stroke="currentColor" stroke-width="1.600" stroke-linecap="butt" stroke-linejoin="miter"><path d="M4.200 17.300V5a2.300 2.300 0 0 1 2.300-2.300h7.200A2.300 2.300 0 0 1 16 5v12.300l-5.900-3.600z"/></svg></div>
 <div class="abs" style="left:1401px;top:27px;color:#50565e"><svg width="20" height="20" viewBox="0 0 20 20" fill="none" stroke="currentColor" stroke-width="1.600" stroke-linecap="round" stroke-linejoin="round"><circle cx="11.600" cy="6.100" r="3.700"/><path d="M9.300 13.600h5a3.800 3.800 0 0 1 3.800 3.800v.4"/><path d="M1.600 15h5M4.300 12.600l2.400 2.400-2.400 2.400" stroke-width="1.500"/></svg></div>
 <div class="abs" style="left:1448.2px;top:29.700px;width:3.500px;height:3.500px;border-radius:50%;background:#50565e;box-shadow:0 5.700px 0 #50565e,0 11.400px 0 #50565e"></div>
</div><div class="row" style="top:462px">
 <div class="cb" style="top:26px"></div>
 <div class="t mono" style="left:82px;top:27.500px;font-size:18px;color:#6a7079;transform:scaleX(.825);transform-origin:0 50%">WOR-<span style="color:#1f2328">05</span></div>
 <div class="ibox" style="left:151.3px;top:21.300px"><svg width="21" height="20" viewBox="0 0 20.200 20"><path d="M0 3.100 8.200 2v6.600H0zM10.100 1.700 20.200 0v8.600H10.100zM0 11.200h8.200v6.700L0 16.800zM10.100 11.200h10.100V20l-10.100-1.800z" fill="#2b7af0"/></svg></div>
 <div class="dot" style="left:184.5px;top:36px;width:37px"></div>
 <div class="abs" style="left:227.4px;top:27.600px;color:#787e86"><svg width="17" height="17" viewBox="0 0 20 20" fill="none" stroke="currentColor" stroke-width="1.650" stroke-linecap="round" stroke-linejoin="round"><rect x="1.400" y="13.200" width="17.200" height="5" rx="1.800"/><path d="M10 7.500v5.500"/><path d="M6.300 4.300Q4.700 6.800 6.300 9.200"/><path d="M13.700 4.300Q15.300 6.800 13.700 9.200"/><path d="M2.900 1.700Q.3 5.500 2.200 9.400"/><path d="M17.100 1.700Q19.700 5.500 17.800 9.400"/></svg></div>
 <div class="dot" style="left:250.5px;top:36px;width:38px"></div>
 <div class="ibox" style="left:288.4px;top:21.300px;color:#4a4f57"><svg width="22.5" height="22.5" viewBox="0 0 24 24" fill="none" stroke="currentColor" stroke-width="1.8" stroke-linecap="round" stroke-linejoin="round" class="" style=""><path d="M5.500 12h13"/><path d="M12 5.500v13"/></svg></div>
 <div class="t" style="left:347px;top:28.700px;font-size:14.500px;color:#14191f;letter-spacing:.85px;-webkit-text-stroke:.25px #14191f">test</div>
 <div class="btn" style="left:566.2px;top:21px;width:81.600px;height:31.700px;border-color:#bcc2ca">
   <div class="abs" style="left:13.200px;top:6.700px"><svg width="16.800" height="16.800" viewBox="0 0 24 24"><circle cx="12" cy="12" r="12" fill="#209cf1"/>
<circle cx="12" cy="12" r="4.700" fill="none" stroke="#fff" stroke-width="2.300"/>
<path d="M12 7.300H22.500" stroke="#fff" stroke-width="2.300" fill="none"/>
<path d="M7.900 14.400L2.700 5.400" stroke="#fff" stroke-width="2.300" fill="none"/>
<path d="M16.100 14.400L10.900 23.400" stroke="#fff" stroke-width="2.300" fill="none"/></svg></div><div class="t" style="left:37px;top:7.500px;font-size:15px">打开</div></div>
 <div class="abs" style="left:723px;top:27px;color:#5a6068"><svg width="20" height="20" viewBox="0 0 20 20" fill="none" stroke="currentColor" stroke-width="1.600" stroke-linecap="round" stroke-linejoin="round"><path d="M14.900 10.300V4.300a2.800 2.800 0 0 0-2.800-2.800H5.100a2.800 2.800 0 0 0-2.800 2.800v10.700a2.800 2.800 0 0 0 2.800 2.800h3.200"/><path d="M5.600 5.700h6.300M5.600 9.100h5.800M5.600 12.500h2"/><path d="M9.900 14.700h6.200M13 11.600v6.200" stroke-width="1.700"/></svg></div>
 <div class="tagc" style="left:1001px;top:19.600px"><svg width="18" height="18" viewBox="0 0 24 24" fill="none" stroke="currentColor" stroke-width="2" stroke-linecap="round" stroke-linejoin="round" class="" style=""><path d="M12.586 2.586A2 2 0 0 0 11.172 2H4a2 2 0 0 0-2 2v7.172a2 2 0 0 0 .586 1.414l8.704 8.704a2.426 2.426 0 0 0 3.420 0l6.580-6.580a2.426 2.426 0 0 0 0-3.420z"/><circle cx="7.500" cy="7.500" r=".8" fill="currentColor"/></svg></div>
 <div class="chip" style="left:1120.2px;top:21px;width:101.600px;height:31.500px"><div class="abs" style="left:6px;top:5.500px;color:#3f4650"><svg width="19" height="19" viewBox="0 0 24 24" fill="none" stroke="currentColor" stroke-width="1.9" stroke-linecap="round" stroke-linejoin="round" class="" style=""><path d="m12.83 2.18a2 2 0 0 0-1.66 0L2.6 6.08a1 1 0 0 0 0 1.83l8.58 3.91a2 2 0 0 0 1.66 0l8.58-3.9a1 1 0 0 0 0-1.83Z"/><path d="m22 17.65-9.17 4.16a2 2 0 0 1-1.66 0L2 17.65"/><path d="m22 12.65-9.17 4.16a2 2 0 0 1-1.66 0L2 12.65"/></svg></div><div class="t" style="left:32px;top:7.500px;font-size:15px;letter-spacing:.1px">默认项目</div></div>
 <div class="t" style="left:1252.3px;top:30.700px;font-size:16px;color:#14191f;letter-spacing:.25px">2025/06/17</div>
 <div class="abs" style="left:1326px;top:0;width:10px;height:74px;background:linear-gradient(90deg,rgba(225,230,240,0),rgba(225,230,240,.55))"></div>
 <div class="abs" style="left:1336px;top:0;width:151px;height:74px;background:#fff;border-left:1px solid #e4e8f0"></div>
 <div class="abs" style="left:1362px;top:27px;color:#50565e"><svg width="20" height="20" viewBox="0 0 20 20" fill="none" stroke="currentColor" stroke-width="1.600" stroke-linecap="butt" stroke-linejoin="miter"><path d="M4.200 17.300V5a2.300 2.300 0 0 1 2.300-2.300h7.200A2.300 2.300 0 0 1 16 5v12.300l-5.900-3.600z"/></svg></div>
 <div class="abs" style="left:1401px;top:27px;color:#50565e"><svg width="20" height="20" viewBox="0 0 20 20" fill="none" stroke="currentColor" stroke-width="1.600" stroke-linecap="round" stroke-linejoin="round"><circle cx="11.600" cy="6.100" r="3.700"/><path d="M9.300 13.600h5a3.800 3.800 0 0 1 3.800 3.800v.4"/><path d="M1.600 15h5M4.300 12.600l2.400 2.400-2.400 2.400" stroke-width="1.500"/></svg></div>
 <div class="abs" style="left:1448.2px;top:29.700px;width:3.500px;height:3.500px;border-radius:50%;background:#50565e;box-shadow:0 5.700px 0 #50565e,0 11.400px 0 #50565e"></div>
</div>
 <!-- hscroll -->
 <div class="abs" style="left:0;top:971px;width:1486px;height:7px;background:#edf0f3"></div>
 <div class="abs" style="left:-1px;top:971px;width:1410px;height:7px;background:#c5cfd5;border-radius:3.500px"></div>
 <!-- footer -->
 <div class="t" style="left:17.5px;top:995px;font-size:15px;color:#3a4048;letter-spacing:.1px">总计 <span style="font-size:15.500px">5</span> 个</div>
 <div class="btn" style="left:90.5px;top:987.3px;width:96px;height:31.200px;box-shadow:0 1px 1px rgba(16,24,40,.04)"><div class="t" style="left:7.500px;top:7px;font-size:15px"><span style="font-size:15.500px">10</span> 条/页</div><div class="abs" style="left:71.700px;top:6.800px;color:#8592a6"><svg width="17" height="17" viewBox="0 0 24 24" fill="none" stroke="currentColor" stroke-width="1.9" stroke-linecap="round" stroke-linejoin="round" class="" style=""><path d="m6 9 6 6 6-6"/></svg></div></div>
 <div class="t" style="left:1242px;top:995px;font-size:15px;color:#3a4048">跳转页数至</div>
 <div class="btn" style="left:1322.2px;top:987.2px;width:42.400px;height:31.800px;box-shadow:0 1px 1px rgba(16,24,40,.04)"><div class="t" style="left:7.500px;top:7.300px;font-size:15.500px">1</div></div>
 <div class="abs" style="left:1375.5px;top:994.2px;color:#8a929c"><svg width="19" height="19" viewBox="0 0 24 24" fill="none" stroke="currentColor" stroke-width="1.9" stroke-linecap="round" stroke-linejoin="round" class="" style=""><path d="m15 18-6-6 6-6"/></svg></div>
 <div class="abs" style="left:1404px;top:988.3px;width:29.800px;height:29.400px;border:1.300px solid #1d97ee;border-radius:5.500px"></div>
 <div class="t" style="left:1404px;top:994.8px;width:29.800px;text-align:center;color:#1d97ee;font-size:15.500px">1</div>
 <div class="abs" style="left:1444px;top:994.2px;color:#8a929c"><svg width="19" height="19" viewBox="0 0 24 24" fill="none" stroke="currentColor" stroke-width="1.9" stroke-linecap="round" stroke-linejoin="round" class="" style=""><path d="m9 18 6-6-6-6"/></svg></div>
</div>
<svg class="abs" style="left:830px;top:720px" width="40" height="45" viewBox="830 720 40 45"><path d="M840 730.400L840 753.600L844.700 749.300L848.500 755.800L852.500 753.700L848.800 747.800L856.400 747.500Z" fill="#fff" stroke="#0a0a0a" stroke-width="1.500" stroke-linejoin="miter"/></svg>
<div class="abs" style="left:1704px;top:1003.800px;width:60px;height:60px;border-radius:50%;background:#16a2f9;box-shadow:0 0 12px rgba(20,60,120,.06)"></div>
<svg class="abs" style="left:1716px;top:1016px" width="36" height="36" viewBox="0 0 36 36"><path d="M17.500 4.500c8.500 0 14.900 5 14.900 11.800 0 6-4.500 10.500-11.500 11.800l0 4.800C15 30.500 11.500 29 8.500 26.800 5 24.300 2.700 20.800 2.700 16.300 2.700 9.500 9 4.500 17.500 4.500z" fill="#fff"/><path d="M11.800 18.600Q17.600 25.200 23.400 18.600" stroke="#16a2f9" stroke-width="2.200" fill="none" stroke-linecap="round"/></svg>

</div>
</body></html>
